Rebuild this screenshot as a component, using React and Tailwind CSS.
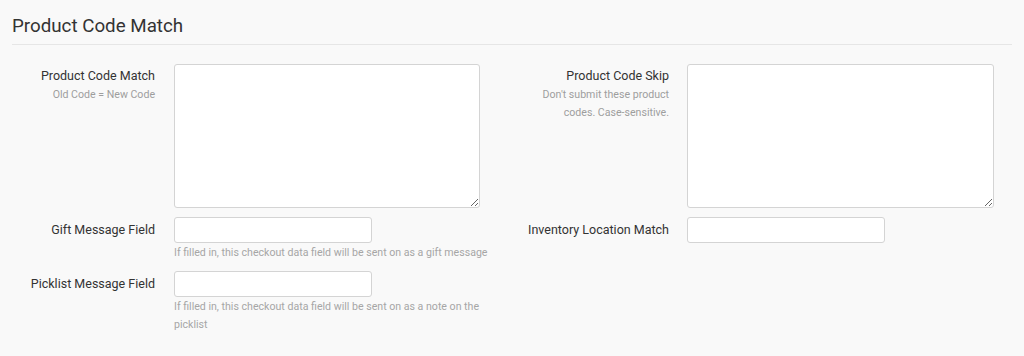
export default function App() {
  const font = { fontFamily: "Roboto, 'Noto Sans', sans-serif" };
  return (
    <div className="w-[1024px] h-[356px] bg-[#f9f9f9] overflow-hidden" style={font}>
      <div className="px-3 pt-[13px]">
        <h1 className="text-[18.75px] leading-[26px] text-[#333333] font-normal pb-[5px] border-b border-[#e6e6e6]">
          Product Code Match
        </h1>
      </div>
      <div className="flex pl-3 pt-[19px]">
        {/* Left column */}
        <div className="w-[501px] flex flex-col">
          <div className="flex gap-[19px]">
            <div className="w-[143px] text-right pt-[2px]">
              <div className="text-[12.5px] leading-[20px] text-[#333333]">Product Code Match</div>
              <div className="text-[10.6px] leading-[18px] text-[#9e9e9e]">Old Code = New Code</div>
            </div>
            <textarea className="w-[306px] h-[144px] bg-white border border-[#d4d4d4] rounded-[3px] outline-none" />
          </div>
          <div className="flex gap-[19px] mt-[9px]">
            <div className="w-[143px] text-right text-[12.5px] leading-[26px] text-[#333333]">Gift Message Field</div>
            <div className="flex flex-col">
              <input className="w-[198px] h-[26px] bg-white border border-[#d4d4d4] rounded-[3px] outline-none" />
              <div className="text-[10.6px] leading-[18px] text-[#a6a6a6] mt-[1px]">
                If filled in, this checkout data field will be sent on as a gift message
              </div>
            </div>
          </div>
          <div className="flex gap-[19px] mt-[9px]">
            <div className="w-[143px] text-right text-[12.5px] leading-[26px] text-[#333333]">Picklist Message Field</div>
            <div className="flex flex-col">
              <input className="w-[198px] h-[26px] bg-white border border-[#d4d4d4] rounded-[3px] outline-none" />
              <div className="w-[312px] text-[10.6px] leading-[18px] text-[#a6a6a6] mt-[1px]">
                If filled in, this checkout data field will be sent on as a note on the picklist
              </div>
            </div>
          </div>
        </div>
        {/* Right column */}
        <div className="flex flex-col">
          <div className="flex gap-[18px]">
            <div className="w-[156px] text-right pt-[2px]">
              <div className="text-[12.5px] leading-[20px] text-[#333333]">Product Code Skip</div>
              <div className="text-[10.6px] leading-[18px] text-[#9e9e9e] pl-[10px]">
                Don't submit these product codes. Case-sensitive.
              </div>
            </div>
            <textarea className="w-[307px] h-[144px] bg-white border border-[#d4d4d4] rounded-[3px] outline-none" />
          </div>
          <div className="flex gap-[18px] mt-[9px]">
            <div className="w-[156px] text-right text-[12.5px] leading-[26px] text-[#333333]">Inventory Location Match</div>
            <input className="w-[198px] h-[26px] bg-white border border-[#d4d4d4] rounded-[3px] outline-none" />
          </div>
        </div>
      </div>
    </div>
  );
}
